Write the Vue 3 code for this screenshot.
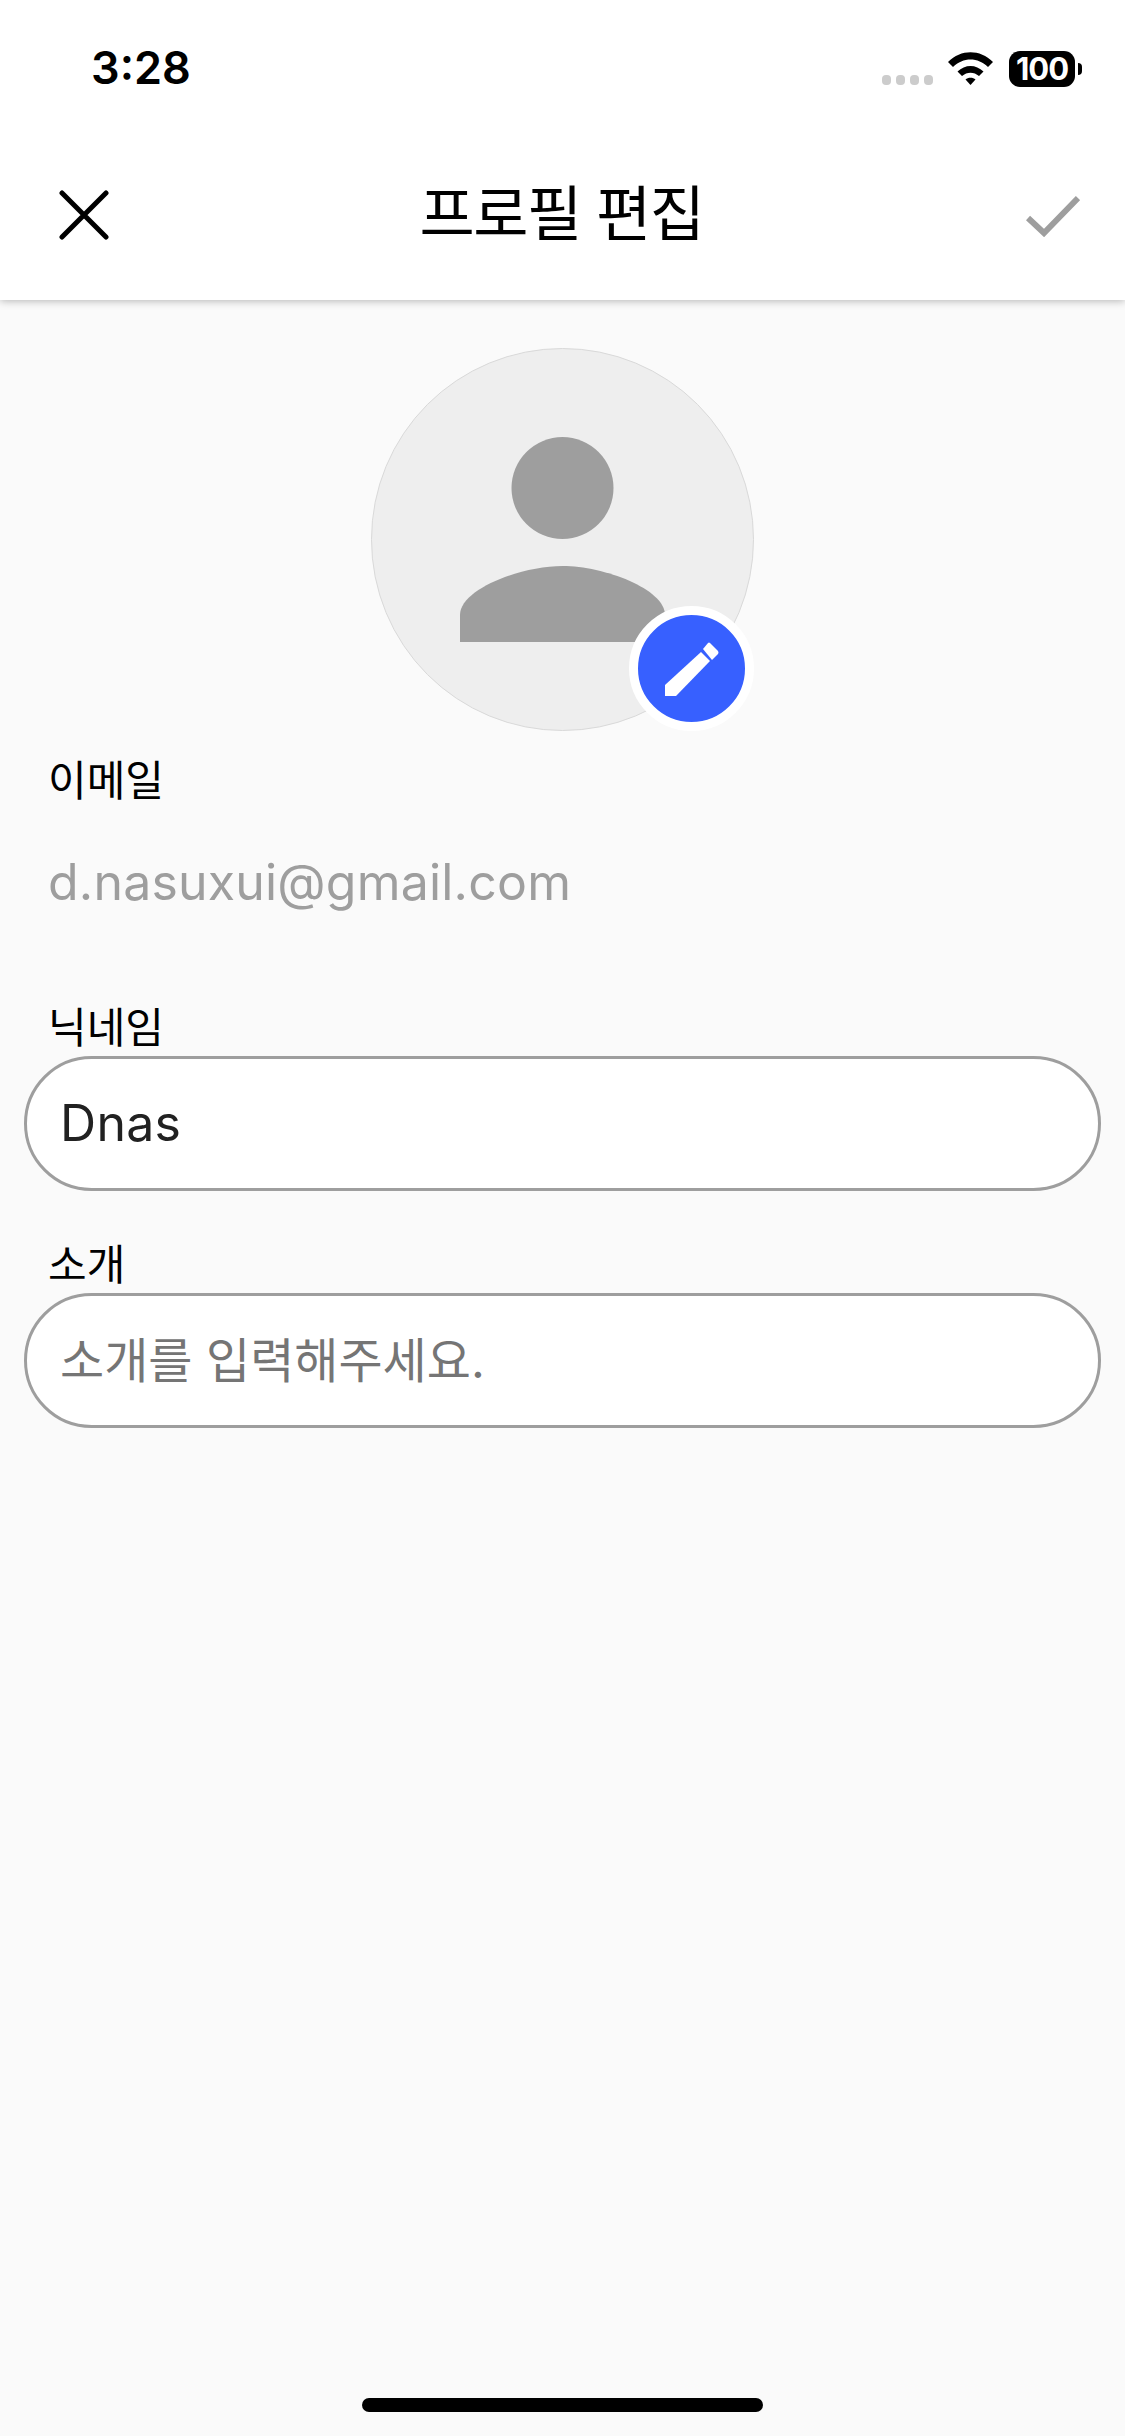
<template>
  <div class="screen">
    <header class="top">
      <div class="status-bar">
        <span class="time">3:28</span>
        <div class="status-icons">
          <div class="signal"><i v-for="n in 4" :key="n"></i></div>
          <svg class="wifi" width="45" height="33" viewBox="0 0 45 33">
            <path d="M0 10C13-3 32-3 45 10L40 15C30 5 15 5 5 15Z" />
            <path d="M9.500 19.500C17 12 28 12 35.500 19.500L31 24C26 19.500 19 19.500 14 24Z" />
            <path d="M17.500 27.500C20 25 25 25 27.500 27.500L22.500 33Z" />
          </svg>
          <div class="battery">100</div>
          <div class="battery-nub"></div>
        </div>
      </div>
      <nav class="nav">
        <svg width="50" height="50" viewBox="0 0 50 50" class="nav-icon">
          <path d="M3 3L47 47M47 3L3 47" stroke="#000" stroke-width="5" stroke-linecap="round" fill="none" />
        </svg>
        <h1 class="title">프로필 편집</h1>
        <svg width="54" height="44" viewBox="0 0 54 44" class="nav-icon">
          <path d="M2 25L18 40L52 5" stroke="#9e9e9e" stroke-width="6" fill="none" />
        </svg>
      </nav>
    </header>

    <main class="content">
      <div class="avatar-wrap">
        <div class="avatar">
          <svg width="381" height="381" viewBox="0 0 381 381">
            <circle cx="190.500" cy="139" r="51" fill="#9e9e9e" />
            <path d="M88 293V266C88 240 149 217 190.500 217C232 217 293 240 293 266V293Z" fill="#9e9e9e" />
          </svg>
        </div>
        <button class="edit-badge" type="button">
          <svg width="108" height="108" viewBox="0 0 108 108">
            <path d="M27 70L63 37L72 46L38 81H27Z" fill="#fff" />
            <path d="M65 34L70 28Q71 27 72 28L80 36Q81 38 80 39L74 45Z" fill="#fff" />
          </svg>
        </button>
      </div>

      <section class="email-block">
        <label class="field-label">이메일</label>
        <p class="email">d.nasuxui@gmail.com</p>
      </section>

      <section v-for="field in fields" :key="field.label" class="field">
        <label class="field-label">{{ field.label }}</label>
        <div class="input" :class="{ placeholder: !field.value }">{{ field.value || field.placeholder }}</div>
      </section>
    </main>

    <div class="home-indicator"></div>
  </div>
</template>

<script setup>
const fields = [
  { label: '닉네임', value: 'Dnas', placeholder: '' },
  { label: '소개', value: '', placeholder: '소개를 입력해주세요.' }
]
</script>

<style>
html, body {
  margin: 0;
  background: #fafafa;
}
</style>

<style scoped>
.screen {
  width: 1125px;
  height: 2436px;
  background: #fafafa;
  display: flex;
  flex-direction: column;
  font-family: Inter, "Noto Sans CJK KR", sans-serif;
  color: #000;
  overflow: hidden;
}

.top {
  height: 300px;
  background: #fff;
  box-shadow: 0 1px 8px rgba(0, 0, 0, 0.28);
  flex-shrink: 0;
  position: relative;
}

.status-bar {
  height: 132px;
  box-sizing: border-box;
  padding: 44px 43px 0 91px;
  display: flex;
  justify-content: space-between;
  align-items: flex-start;
}

.time {
  font-size: 45px;
  line-height: 48px;
  font-weight: 600;
}

.status-icons {
  display: flex;
  align-items: flex-start;
  margin-top: 7px;
}

.signal {
  display: flex;
  gap: 5px;
  margin-top: 24px;
  margin-right: 15px;
}

.signal i {
  width: 9px;
  height: 10px;
  border-radius: 4px;
  background: #ccc;
}

.wifi {
  margin-top: 1px;
  margin-right: 16px;
}

.battery {
  width: 66px;
  height: 36px;
  border-radius: 11px;
  background: #000;
  color: #fff;
  font-size: 31px;
  line-height: 36px;
  font-weight: 700;
  text-align: center;
  letter-spacing: -1px;
}

.battery-nub {
  width: 4px;
  height: 12px;
  margin: 12px 0 0 3px;
  background: #000;
  border-radius: 0 4px 4px 0;
}

.nav {
  display: flex;
  align-items: center;
  justify-content: space-between;
  padding: 4px 45px 0 59px;
  height: 162px;
  box-sizing: border-box;
}

.title {
  margin: 0 12px 2px 0;
  font-size: 60px;
  line-height: 80px;
  font-weight: 400;
  letter-spacing: -1.500px;
}

.nav-icon {
  flex-shrink: 0;
}

.content {
  flex: 1;
  display: flex;
  flex-direction: column;
}

.avatar-wrap {
  width: 383px;
  height: 383px;
  margin: 48px auto 0;
  position: relative;
}

.avatar {
  width: 383px;
  height: 383px;
  box-sizing: border-box;
  border-radius: 50%;
  background: #eee;
  border: 1px solid #d9d9d9;
}

.avatar svg {
  display: block;
}

.edit-badge {
  position: absolute;
  right: 0;
  bottom: 0;
  width: 125px;
  height: 125px;
  padding: 0;
  border: 9px solid #fff;
  box-sizing: border-box;
  border-radius: 50%;
  background: #3760ff;
  display: flex;
  align-items: center;
  justify-content: center;
}

.edit-badge svg {
  flex-shrink: 0;
}

.email-block {
  padding: 19px 48px 0;
  height: 266px;
  box-sizing: border-box;
}

.field-label {
  display: block;
  font-size: 42px;
  line-height: 56px;
  font-family: "Noto Sans CJK KR", sans-serif;
}

.email {
  margin: 46px 0 0;
  font-size: 50px;
  line-height: 60px;
  color: #9e9e9e;
  letter-spacing: 0.200px;
}

.field {
  padding: 0 24px;
  margin-bottom: 43px;
}

.field .field-label {
  margin-left: 24px;
  margin-bottom: 3px;
}

.input {
  height: 135px;
  box-sizing: border-box;
  border: 3px solid #9e9e9e;
  border-radius: 68px;
  background: #fff;
  padding: 0 33px;
  font-size: 50px;
  line-height: 129px;
  color: #212121;
  letter-spacing: 0.300px;
}

.input.placeholder {
  color: #757575;
  font-size: 48px;
  letter-spacing: 0;
}

.home-indicator {
  width: 401px;
  height: 14px;
  border-radius: 7px;
  background: #000;
  margin: 0 auto 24px;
  flex-shrink: 0;
}
</style>
